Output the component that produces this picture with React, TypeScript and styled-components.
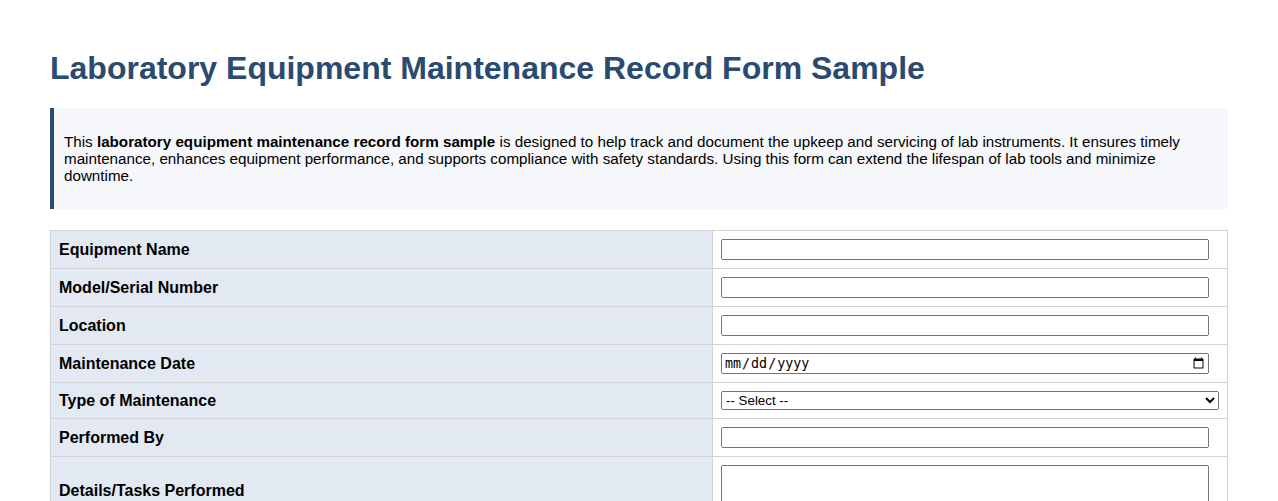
import React from 'react'
import styled, { createGlobalStyle } from 'styled-components'

const GlobalStyle = createGlobalStyle`
  body {
    margin: 0;
    background: #ffffff;
    font-family: "Liberation Sans", Arial, sans-serif;
    color: #000;
  }
`

const Page = styled.div`
  padding: 50px 50px 40px;
`

const Title = styled.h1`
  font-size: 32px;
  font-weight: 700;
  color: #2a4b6f;
  margin: 0 0 21px 0;
`

const Intro = styled.div`
  background: #f5f7fa;
  border-left: 4px solid #2a4b6f;
  padding: 10px;

  p {
    font-size: 15.2px;
    margin: 15px 0;
  }
`

const FormTable = styled.table`
  width: 100%;
  margin-top: 21px;
  border-collapse: collapse;
  table-layout: fixed;
  border: 1px solid #d3d3d3;
`

const LabelCol = styled.col`
  width: 662px;
`

const Row = styled.tr``

const LabelCell = styled.th`
  background: #e3e9f2;
  border: 1px solid #d3d3d3;
  padding: 8px;
  text-align: left;
  font-size: 16px;
  font-weight: 700;
  vertical-align: middle;
`

const FieldCell = styled.td`
  border: 1px solid #d3d3d3;
  padding: 8px;
  vertical-align: middle;
`

const TextInput = styled.input`
  box-sizing: border-box;
  width: calc(100% - 10px);
  display: block;
`

const Select = styled.select`
  width: 100%;
  display: block;
`

const TextArea = styled.textarea`
  box-sizing: border-box;
  width: calc(100% - 10px);
  height: 52px;
  display: block;
  resize: vertical;
`

type Field = { label: string; kind: 'text' | 'date' | 'select' | 'textarea' }

const fields: Field[] = [
  { label: 'Equipment Name', kind: 'text' },
  { label: 'Model/Serial Number', kind: 'text' },
  { label: 'Location', kind: 'text' },
  { label: 'Maintenance Date', kind: 'date' },
  { label: 'Type of Maintenance', kind: 'select' },
  { label: 'Performed By', kind: 'text' },
  { label: 'Details/Tasks Performed', kind: 'textarea' },
]

const renderField = (field: Field) => {
  switch (field.kind) {
    case 'date':
      return <TextInput type="date" />
    case 'select':
      return (
        <Select defaultValue="">
          <option value="">-- Select --</option>
          <option>Preventive</option>
          <option>Corrective</option>
          <option>Calibration</option>
        </Select>
      )
    case 'textarea':
      return <TextArea />
    default:
      return <TextInput type="text" />
  }
}

export default function App() {
  return (
    <Page>
      <GlobalStyle />
      <Title>Laboratory Equipment Maintenance Record Form Sample</Title>
      <Intro>
        <p>
          This <strong>laboratory equipment maintenance record form sample</strong> is designed to
          help track and document the upkeep and servicing of lab instruments. It ensures timely
          maintenance, enhances equipment performance, and supports compliance with safety
          standards. Using this form can extend the lifespan of lab tools and minimize downtime.
        </p>
      </Intro>
      <FormTable>
        <colgroup>
          <LabelCol />
          <col />
        </colgroup>
        <tbody>
          {fields.map((f) => (
            <Row key={f.label}>
              <LabelCell>{f.label}</LabelCell>
              <FieldCell>{renderField(f)}</FieldCell>
            </Row>
          ))}
        </tbody>
      </FormTable>
    </Page>
  )
}
